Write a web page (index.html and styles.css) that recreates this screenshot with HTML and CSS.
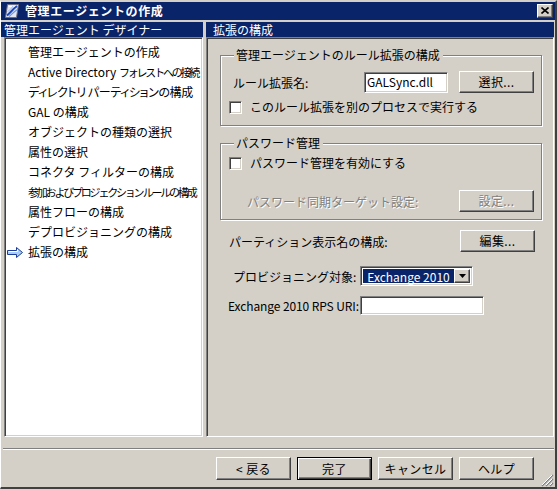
FILE: index.html
```html
<!DOCTYPE html>
<html lang="ja">
<head>
<meta charset="utf-8">
<title>管理エージェントの作成</title>
<link rel="stylesheet" href="styles.css">
</head>
<body>
<div class="window">
  <div class="titlebar">
    <svg class="appicon" width="16" height="16" viewBox="0 0 16 16">
      <path d="M3.5 1.5H14.5L12.5 14.5H1.5Z" fill="#e6e6ee" stroke="#6c6c80"/>
      <path d="M4.5 3.5H12.5" stroke="#ffffff"/>
      <path d="M3 12.5C6 10 9 6 13 3" stroke="#1c48c0" stroke-width="2" fill="none"/>
      <path d="M5 13.5C8 11 10.5 8.5 13.5 6.5" stroke="#6a98e8" stroke-width="1.3" fill="none"/>
      <path d="M3.5 8.5C5.5 7.5 7.5 5.5 9 3" stroke="#9ab8f0" stroke-width="1" fill="none"/>
    </svg>
    <span class="title">管理エージェントの作成</span>
    <div class="closebtn">
      <svg width="8" height="7" viewBox="0 0 8 7"><path d="M0.5 0.5L7.5 6.5M7.5 0.5L0.5 6.5" stroke="#000" stroke-width="1.6"/></svg>
    </div>
  </div>

  <div class="main">
    <div class="header header-left">管理エージェント デザイナー</div>
    <div class="header header-right">拡張の構成</div>

    <ul class="steps">
      <li><span class="ico"></span><span>管理エージェントの作成</span></li>
      <li><span class="ico"></span><span>Active Directory <span class="squeeze">フォレストへの接続</span></span></li>
      <li><span class="ico"></span><span class="palt">ディレクトリ パーティションの構成</span></li>
      <li><span class="ico"></span><span>GAL の構成</span></li>
      <li><span class="ico"></span><span>オブジェクトの種類の選択</span></li>
      <li><span class="ico"></span><span>属性の選択</span></li>
      <li><span class="ico"></span><span>コネクタ フィルターの構成</span></li>
      <li><span class="ico"></span><span class="squeeze">参加およびプロジェクション ルールの構成</span></li>
      <li><span class="ico"></span><span>属性フローの構成</span></li>
      <li><span class="ico"></span><span>デプロビジョニングの構成</span></li>
      <li class="current"><span class="ico"><svg width="17" height="11" viewBox="0 0 17 11"><path d="M0.5 3.5H9.5V0.5L15.5 5.5L9.5 10.5V7.5H0.5Z" fill="#a8ccf4" stroke="#1c3c9c"/><path d="M1.5 4.5H10.5V2.5" stroke="#ffffff" fill="none"/></svg></span><span>拡張の構成</span></li>
    </ul>

    <div class="panel">
      <fieldset class="group g1">
        <legend>管理エージェントのルール拡張の構成</legend>
        <div class="row name-row">
          <span class="name-label">ルール拡張名:</span>
          <div class="textbox name-box">GALSync.dll</div>
          <div class="btn select-btn">選択...</div>
        </div>
        <div class="check-row">
          <span class="checkbox"></span>
          <span class="check-label">このルール拡張を別のプロセスで実行する</span>
        </div>
      </fieldset>

      <fieldset class="group g2">
        <legend>パスワード管理</legend>
        <div class="check-row">
          <span class="checkbox"></span>
          <span class="check-label">パスワード管理を有効にする</span>
        </div>
        <div class="row sync-row">
          <span class="disabled-text sync-label">パスワード同期ターゲット設定:</span>
          <div class="btn btn-disabled">設定...</div>
        </div>
      </fieldset>

      <div class="row partition-row">
        <span>パーティション表示名の構成:</span>
        <div class="btn">編集...</div>
      </div>

      <div class="form-grid">
        <span class="prov-label">プロビジョニング対象:</span>
        <div class="combo">
          <div class="combo-value">Exchange 2010</div>
          <div class="combo-arrow"><svg width="7" height="4" viewBox="0 0 7 4"><path d="M0 0H7L3.5 4Z" fill="#000"/></svg></div>
        </div>
        <span class="uri-label">Exchange 2010 RPS URI:</span>
        <div class="textbox uri-box"></div>
      </div>
    </div>
  </div>

  <div class="separator"></div>

  <div class="footer">
    <div class="buttons">
      <div class="btn fbtn">&lt; 戻る</div>
      <div class="btn fbtn btn-default">完了</div>
      <div class="btn fbtn">キャンセル</div>
      <div class="btn fbtn">ヘルプ</div>
    </div>
    <svg class="grip" width="13" height="13" viewBox="0 0 13 13">
      <path d="M12 1L1 12M12 5L5 12M12 9L9 12" stroke="#808080" stroke-width="1.4"/>
      <path d="M11 1L1 11M11 5L5 11M11 9L9 11" stroke="#ffffff" stroke-width="1"/>
    </svg>
  </div>
</div>
</body>
</html>
```

FILE: styles.css
```css
* {
  box-sizing: border-box;
}

html, body {
  margin: 0;
  padding: 0;
}

body {
  width: 557px;
  height: 489px;
  overflow: hidden;
  background: #d4d0c8;
  font-family: "Noto Sans CJK JP", "Liberation Sans", sans-serif;
  font-size: 12px;
  color: #000;
}

.window {
  width: 557px;
  height: 489px;
  display: flex;
  flex-direction: column;
  border-style: solid;
  border-width: 2px 2px 2px 1px;
  border-color: #d4d0c8 #404040 #404040 #ffffff;
  background: #d4d0c8;
}

/* Title bar */
.titlebar {
  height: 18px;
  flex: none;
  background: #0a246a;
  display: flex;
  align-items: center;
  padding: 0 2px 0 2px;
}

.appicon {
  flex: none;
  margin-left: 1px;
}

.title {
  color: #fff;
  font-weight: bold;
  letter-spacing: 0.6px;
  margin-left: 5px;
  line-height: 18px;
  flex: 1;
}

.closebtn {
  width: 16px;
  height: 14px;
  background: #d4d0c8;
  border-style: solid;
  border-width: 1px;
  border-color: #ffffff #404040 #404040 #ffffff;
  box-shadow: inset -1px -1px 0 #808080;
  display: flex;
  align-items: center;
  justify-content: center;
  padding-bottom: 1px;
}

/* Main area */
.main {
  margin-top: 2px;
  display: grid;
  grid-template-columns: 202px 348px;
  grid-template-rows: 15px 400px;
  column-gap: 3px;
  flex: none;
}

.header {
  background: #0a246a;
  color: #fff;
  line-height: 15px;
  white-space: nowrap;
  overflow: hidden;
}

.header-left {
  padding-left: 3px;
}

.header-right {
  padding-left: 7px;
}

.steps {
  list-style: none;
  margin: 0 0 0 3px;
  padding: 4px 0 0 0;
  background: #fff;
  border-style: solid;
  border-width: 1px;
  border-color: #808080 #ffffff #ffffff #808080;
  box-shadow: inset 1px 1px 0 #404040, inset -1px -1px 0 #d4d0c8;
  overflow: hidden;
}

.steps li {
  height: 20px;
  display: flex;
  align-items: center;
  white-space: nowrap;
  line-height: 20px;
}

.steps .ico {
  width: 23px;
  flex: none;
  display: flex;
  align-items: center;
  padding-left: 2px;
}

.squeeze {
  font-size: 11px;
  letter-spacing: -2.2px;
}

.palt {
  font-feature-settings: "palt";
  letter-spacing: -0.4px;
}

.panel {
  background: #d4d0c8;
  border-style: solid;
  border-width: 1px;
  border-color: #808080 #ffffff #ffffff #808080;
  box-shadow: inset 1px 1px 0 #404040, inset -1px -1px 0 #d4d0c8;
  padding: 1px;
  display: flex;
  flex-direction: column;
}

/* Group boxes */
.group {
  margin: 9px 10px 0 12px;
  padding: 0;
  min-width: 0;
  border: 1px solid #808080;
  box-shadow: inset 1px 1px 0 #ffffff, 1px 1px 0 #ffffff;
}

.group legend {
  margin-left: 5px;
  padding: 0 3px 0 2px;
  line-height: 14px;
  background: #d4d0c8;
  white-space: nowrap;
}

.g1 {
  padding: 9px 7px 11px 8px;
}

.g2 {
  margin-top: 10px;
  padding: 6px 7px 7px 8px;
}

.row {
  display: flex;
  align-items: center;
}

.name-row {
  height: 22px;
}

.name-label {
  width: 131px;
  margin-left: 4px;
  flex: none;
}

.textbox {
  background: #fff;
  border-style: solid;
  border-width: 1px;
  border-color: #808080 #ffffff #ffffff #808080;
  box-shadow: inset 1px 1px 0 #404040, inset -1px -1px 0 #d4d0c8;
  font-size: 12px;
  line-height: 17px;
  padding-left: 2px;
  white-space: nowrap;
}

.name-box {
  width: 84px;
  height: 21px;
  margin-right: 11px;
  flex: none;
}

.btn {
  width: 75px;
  height: 22px;
  flex: none;
  background: #d4d0c8;
  border-style: solid;
  border-width: 1px;
  border-color: #ffffff #404040 #404040 #ffffff;
  box-shadow: inset -1px -1px 0 #808080;
  display: flex;
  align-items: center;
  justify-content: center;
  line-height: 20px;
  letter-spacing: 0.4px;
  white-space: nowrap;
}

.btn-disabled {
  color: #808080;
  text-shadow: 1px 1px 0 #ffffff;
}

.check-row {
  display: flex;
  align-items: center;
  height: 14px;
  line-height: 14px;
}

.g1 .check-row {
  margin-top: 7px;
}

.checkbox {
  width: 13px;
  height: 13px;
  flex: none;
  background: #fff;
  border-style: solid;
  border-width: 1px;
  border-color: #808080 #ffffff #ffffff #808080;
  box-shadow: inset 1px 1px 0 #404040, inset -1px -1px 0 #d4d0c8;
}

.check-label {
  margin-left: 8px;
  white-space: nowrap;
}

.sync-row {
  margin-top: 20px;
  height: 22px;
  justify-content: space-between;
}

.sync-label {
  margin-left: 18px;
}

.disabled-text {
  color: #808080;
  text-shadow: 1px 1px 0 #ffffff;
  white-space: nowrap;
}

.partition-row {
  margin: 10px 17px 0 21px;
  height: 22px;
  justify-content: space-between;
}

.form-grid {
  margin: 14px 0 0 21px;
  display: grid;
  grid-template-columns: 131px auto;
  grid-template-rows: 20px 19px;
  row-gap: 10px;
  align-items: center;
  justify-items: start;
}

.prov-label {
  padding-left: 4px;
  white-space: nowrap;
}

.uri-label {
  margin-left: -1px;
  white-space: nowrap;
  letter-spacing: -0.1px;
}

.combo {
  width: 113px;
  height: 20px;
  background: #fff;
  border-style: solid;
  border-width: 1px;
  border-color: #808080 #ffffff #ffffff #808080;
  box-shadow: inset 1px 1px 0 #404040, inset -1px -1px 0 #d4d0c8;
  padding: 2px;
  display: flex;
}

.combo-value {
  flex: 1;
  background: #0a246a;
  color: #fff;
  line-height: 16px;
  text-align: center;
  white-space: nowrap;
}

.combo-arrow {
  width: 16px;
  flex: none;
  background: #d4d0c8;
  border-style: solid;
  border-width: 1px;
  border-color: #ffffff #404040 #404040 #ffffff;
  box-shadow: inset -1px -1px 0 #808080;
  display: flex;
  align-items: center;
  justify-content: center;
}

.uri-box {
  width: 124px;
  height: 19px;
}

/* Separator and footer */
.separator {
  flex: none;
  margin: 11px 1px 0 2px;
  height: 2px;
  border-top: 1px solid #808080;
  border-bottom: 1px solid #ffffff;
}

.footer {
  flex: 1;
  display: flex;
  justify-content: flex-end;
  align-items: flex-end;
  padding: 0 1px 0 0;
}

.buttons {
  display: flex;
  gap: 6px;
  margin-bottom: 7px;
}

.fbtn {
  height: 23px;
}

.btn-default {
  border: 1px solid #000;
  box-shadow: inset 1px 1px 0 #ffffff, inset -1px -1px 0 #404040, inset -2px -2px 0 #808080;
}

.grip {
  flex: none;
  margin-left: 7px;
}
```
